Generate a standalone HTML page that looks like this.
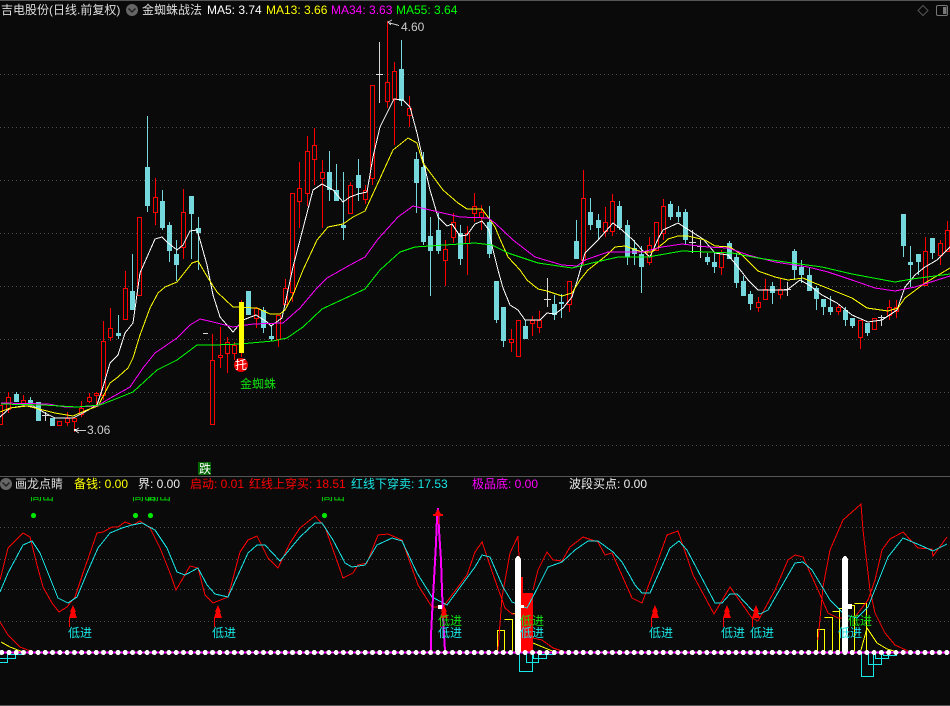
<!DOCTYPE html>
<html lang="zh"><head><meta charset="utf-8"><title>金蜘蛛战法</title>
<style>
html,body{margin:0;padding:0;background:#0a0a0a}
#p{position:relative;width:950px;height:706px;overflow:hidden;background:#0a0a0a;font-family:"Liberation Sans","WenQuanYi Zen Hei","Noto Sans CJK SC",sans-serif;font-size:12px}
#p svg{position:absolute;left:0;top:0}
.t{position:absolute;white-space:nowrap;line-height:14px;height:14px}
.c{position:absolute;overflow:hidden;height:6px;width:24px;top:497px}
.c span{position:absolute;left:0;top:-8px;line-height:14px;color:#00e000;white-space:nowrap}
.l{color:#19e6e6}.g{color:#10e010}
</style></head><body><div id="p">
<svg width="950" height="706" viewBox="0 0 950 706" shape-rendering="crispEdges" fill="none">
<path d="M0 .5H950M0 476.5H950M0 705.5H950" stroke="#555"/>
<path d="M0 74.5H950M0 127.5H950M0 180.5H950M0 233.5H950M0 286.5H950M0 339.5H950M0 392.5H950M0 445.5H950M0 527.5H950M0 559.5H950M0 589.5H950M0 621.5H950" stroke="#4c4c4c" stroke-dasharray="1 3"/>
<!-- white doji -->
<path d="M45.5 412V421M42 415.5H49M203 333.5H208M379.5 42V103M376 74.5H383M547.5 278V307M544 299.5H551M692.5 230V253M689 242.5H696M700.5 240V258M697 246.5H704M787.5 282V296M784 289.5H791M881.5 315V326M878 317.5H885" stroke="#d8d8d8"/>
<!-- cyan wicks -->
<path stroke="#74d8dc" d="M16.5 392V402M30.5 397V404M118.5 315V339M132.5 254V310M147.5 116V212M162.5 190V230M169.5 222V262M176.5 240V281M191.5 196V259M198.5 217V270M248.5 291V315M263.5 307V333M271.5 326V341M329.5 151V201M336.5 164V201M343.5 172V240M358.5 159V201M401.5 40V106M416.5 152V213M423.5 152V245M430.5 217V296M438.5 213V254M460.5 225V265M489.5 206V258M496.5 281V323M503.5 307V347M525.5 320V339M554.5 295V320M561.5 294V318M576.5 220V259M590.5 198V230M598.5 214V240M619.5 201V230M627.5 220V265M634.5 240V265M641.5 246V293M670.5 201V220M678.5 206V222M685.5 209V245M707.5 253V265M714.5 253V273M729.5 241V259M736.5 253V288M743.5 276V296M750.5 291V310M772.5 282V304M794.5 249V280M801.5 260V283M809.5 268V291M816.5 286V310M823.5 299V315M830.5 296V315M845.5 307V326M852.5 318V328M867.5 323V336M903.5 214V257M910.5 246V287M918.5 254V275M932.5 238V259"/>
<!-- cyan bodies -->
<path fill="#74d8dc" d="M14 394h5V402h-5zM28 400h5V404h-5zM36 402h5V421h-5zM50 418h5V426h-5zM116 333h5V336h-5zM130 291h5V310h-5zM145 167h5V206h-5zM160 201h5V228h-5zM167 225h5V251h-5zM174 254h5V265h-5zM189 196h5V214h-5zM196 228h5V233h-5zM246 291h5V315h-5zM261 310h5V328h-5zM269 336h5V339h-5zM327 172h5V190h-5zM334 190h5V201h-5zM341 225h5V228h-5zM356 175h5V188h-5zM399 69h5V101h-5zM414 159h5V183h-5zM421 167h5V242h-5zM428 236h5V251h-5zM436 230h5V251h-5zM458 233h5V259h-5zM487 222h5V254h-5zM494 281h5V320h-5zM501 307h5V341h-5zM523 326h5V339h-5zM552 304h5V315h-5zM559 302h5V304h-5zM574 241h5V259h-5zM588 212h5V225h-5zM596 220h5V228h-5zM617 206h5V228h-5zM625 225h5V257h-5zM632 248h5V254h-5zM639 254h5V267h-5zM668 204h5V217h-5zM676 212h5V217h-5zM683 212h5V240h-5zM705 257h5V262h-5zM712 262h5V267h-5zM727 243h5V259h-5zM734 257h5V283h-5zM741 281h5V296h-5zM748 294h5V304h-5zM770 286h5V293h-5zM792 251h5V270h-5zM799 267h5V275h-5zM807 275h5V291h-5zM814 288h5V299h-5zM821 299h5V307h-5zM828 307h5V312h-5zM843 310h5V320h-5zM850 318h5V326h-5zM865 323h5V333h-5zM901 214h5V246h-5zM908 262h5V265h-5zM916 254h5V262h-5zM930 238h5V253h-5z"/>
<!-- red wicks -->
<path stroke="#f00" d="M8.5 392V413M23.5 395V407M59.5 421V426M67.5 412V426M74.5 417V432M81.5 401V417M89.5 393V403M96.5 392V407M103.5 321V400M110.5 308V341M125.5 271V319M155.5 178V225M183.5 189V259M212.5 334V360M220.5 327V368M227.5 337V373M234.5 342V360M241.5 300V357M256.5 307V328M278.5 315V347M285.5 279V304M292.5 193V302M299.5 162V228M307.5 136V206M314.5 128V185M322.5 160V228M350.5 182V213M365.5 185V204M372.5 85V185M387.5 21V108M394.5 62V145M409.5 96V127M445.5 240V286M453.5 213V243M467.5 226V275M474.5 193V222M481.5 205V230M511.5 329V352M532.5 316V336M539.5 311V333M569.5 281V312M583.5 170V265M605.5 207V237M612.5 194V236M649.5 237V265M663.5 199V240M721.5 250V275M758.5 297V312M765.5 279V299M780.5 279V299M838.5 305V315M860.5 320V349M889.5 300V320M896.5 300V318M925.5 237V285M940.5 240V265M947.5 221V251"/>
<!-- red bodies -->
<path stroke="#f00" fill="#0a0a0a" d="M-1.5 405.5h4V424.5h-4zM6.5 397.5h4V409.5h-4zM21.5 400.5h4V403.5h-4zM57.5 421.5h4V425.5h-4zM65.5 418.5h4V422.5h-4zM72.5 418.5h4V421.5h-4zM79.5 408.5h4V414.5h-4zM87.5 397.5h4V401.5h-4zM94.5 393.5h4V395.5h-4zM101.5 341.5h4V395.5h-4zM108.5 328.5h4V337.5h-4zM123.5 288.5h4V319.5h-4zM137.5 217.5h4V295.5h-4zM153.5 197.5h4V212.5h-4zM181.5 212.5h4V247.5h-4zM210.5 360.5h4V424.5h-4zM218.5 355.5h4V357.5h-4zM225.5 342.5h4V353.5h-4zM232.5 345.5h4V353.5h-4zM254.5 308.5h4V318.5h-4zM276.5 315.5h4V339.5h-4zM283.5 288.5h4V304.5h-4zM290.5 193.5h4V292.5h-4zM297.5 188.5h4V201.5h-4zM305.5 151.5h4V193.5h-4zM312.5 145.5h4V159.5h-4zM320.5 172.5h4V178.5h-4zM348.5 185.5h4V213.5h-4zM363.5 190.5h4V199.5h-4zM370.5 85.5h4V178.5h-4zM385.5 82.5h4V101.5h-4zM392.5 71.5h4V99.5h-4zM407.5 108.5h4V115.5h-4zM443.5 249.5h4V260.5h-4zM451.5 222.5h4V237.5h-4zM465.5 233.5h4V243.5h-4zM472.5 206.5h4V213.5h-4zM479.5 212.5h4V217.5h-4zM509.5 339.5h4V342.5h-4zM516.5 320.5h4V356.5h-4zM530.5 320.5h4V323.5h-4zM537.5 320.5h4V327.5h-4zM567.5 281.5h4V304.5h-4zM581.5 198.5h4V260.5h-4zM603.5 222.5h4V231.5h-4zM610.5 201.5h4V231.5h-4zM647.5 245.5h4V262.5h-4zM654.5 222.5h4V250.5h-4zM661.5 206.5h4V233.5h-4zM719.5 252.5h4V267.5h-4zM756.5 302.5h4V307.5h-4zM763.5 289.5h4V299.5h-4zM778.5 289.5h4V294.5h-4zM836.5 307.5h4V311.5h-4zM858.5 320.5h4V337.5h-4zM872.5 318.5h4V329.5h-4zM887.5 307.5h4V315.5h-4zM894.5 307.5h4V311.5h-4zM923.5 251.5h4V285.5h-4zM938.5 243.5h4V255.5h-4zM945.5 230.5h4V251.5h-4z"/>
<!-- MA5 -->
<polyline stroke="#fff" points="0,417 10,408 23,406 33,406 45,413 55,418 73,418 83,413 97,405 103,387 110,363 118,355 125,333 133,323 140,273 155,239 162,237 167,242 177,250 183,245 190,231 197,230 200,240 207,265 213,295 220,317 233,332 243,320 256,315 267,322 271,326 282,318 293,267 300,240 307,213 313,190 322,184 333,190 343,202 350,197 358,194 367,192 373,157 380,127 387,113 394,99 403,100 410,107 417,133 423,160 430,190 438,217 447,226 452,224 460,236 467,235 475,224 482,221 489,230 493,250 498,270 503,288 510,305 518,310 525,320 540,320 547,313 555,314 563,308 572,297 578,278 585,253 598,240 613,223 622,230 633,240 642,250 650,257 658,239 663,230 678,223 692,232 703,239 715,253 728,255 738,267 748,280 758,290 787,290 800,280 809,285 822,295 837,303 852,315 868,322 882,320 897,310 905,287 915,275 925,267 937,260 950,247"/>
<!-- MA13 -->
<polyline stroke="#ff0" points="0,412 10,408 27,406 43,410 55,413 73,416 87,410 98,406 110,383 118,377 128,368 133,358 140,335 150,308 158,293 165,287 177,282 192,263 198,261 208,278 217,292 233,307 257,308 270,314 280,314 285,310 293,295 303,270 317,240 328,227 343,224 353,217 365,211 377,185 393,150 408,138 417,143 423,163 443,190 458,203 467,209 482,209 488,217 495,227 500,239 508,257 520,270 527,280 538,289 547,291 562,296 572,293 580,280 588,270 607,255 615,247 625,246 642,252 652,252 665,242 668,239 678,236 688,236 705,240 715,246 730,247 742,255 758,271 775,277 788,280 803,278 812,282 832,290 852,298 867,308 888,311 898,308 905,298 925,283 950,268"/>
<!-- MA34 -->
<polyline stroke="#f0f" points="1,403 48,404 65,407 77,407 97,406 107,400 130,387 143,368 155,353 177,338 190,325 200,319 213,322 233,327 253,324 283,323 300,308 317,288 327,278 350,265 365,257 378,239 398,217 413,206 430,210 460,217 488,218 495,223 513,240 535,257 562,265 577,266 585,260 608,252 642,252 662,247 682,244 708,247 728,248 748,255 775,262 808,267 828,272 852,280 875,288 895,291 915,287 950,276"/>
<!-- MA55 -->
<polyline stroke="#0f0" points="1,404 43,405 77,407 100,405 113,400 133,392 157,370 177,360 197,345 215,345 240,344 273,341 287,338 303,327 322,309 365,289 380,270 400,252 415,247 475,243 492,245 508,253 538,263 572,268 592,263 618,257 648,257 682,251 708,252 732,253 758,258 792,263 822,267 852,274 895,282 912,279 950,274"/>
<rect x="239" y="302" width="5" height="51" fill="#ff0"/>
<!-- extreme arrows -->
<path d="M86 430.5H76M79 428L75 430.5L79 433" stroke="#ccc"/><rect x="74" y="429" width="2" height="2" fill="#fff"/>
<path d="M399 25.5L388 22.5M392 20L388 22L391 25" stroke="#ccc"/>
<!-- lower panel: decays, stairs -->
<path d="M497.5 651V630.5H504.5V651M504.5 619.5H512.5V651M512.5 613.5H516M817.5 651V629.5H824.5V651M824.5 617.5H832.5V651M832.5 611.5H839.5V651M839.5 651V608.5H843M848 605.5H854.5V651M854.5 603.5H866.5V651" stroke="#ff0" stroke-width="1"/>
<polyline stroke="#ff0" points="1,642 10,647 23,652"/>
<polyline stroke="#ff0" points="533,643 545,648 555,652"/>
<polyline stroke="#ff0" points="861,650 867,628 877,643 887,649 897,652"/>
<path d="M0 662.5H7.5V652M0 658.5H15.5V653M8 654.5H22V652M519.5 653V671.5H532.5V653M526.5 653V662.5H538.5V653M533.5 653V658.5H546.5V653M538 654.5H555V652M861.5 653V676.5H873.5V653M868.5 653V664.5H881.5V653M875.5 653V658.5H888.5V653M883.5 653V655.5H896.5V653" stroke="#19e6e6"/>
<path fill="#f00" d="M521 577H523V593H533V652H521z"/>
<!-- red KDJ -->
<polyline stroke="#f00" points="0,580 8,548 23,533 30,537 37,565 43,587 52,603 59,612 67,607 75,597 83,573 97,533 103,532 112,527 118,527 125,522 133,525 140,521 150,528 160,548 170,573 176,590 190,566 198,568 205,595 213,603 228,597 240,552 248,540 257,536 268,558 278,568 290,543 300,528 315,516 325,527 343,578 353,573 358,565 367,563 378,535 388,534 402,540 418,585 432,607 443,607 467,575 475,552 482,542 495,580 505,608 512,614 520,614"/>
<polyline stroke="#f00" points="498,650 502,597 510,553 518,536 521,600"/>
<polyline stroke="#f00" points="533,590 538,570 547,552 553,560 562,561 570,547 583,537 598,542 605,555 612,553 632,598 642,603 657,563 667,535 678,531 693,575 714,614 730,587 752,618 758,621 775,590 788,560 795,555 803,557 818,590 828,613 838,618 848,618"/>
<polyline stroke="#f00" points="818,640 823,587 830,550 843,520 861,504 863,530 870,590 875,613 885,633 895,645 908,651"/>
<polyline stroke="#f00" points="855,617 868,600 875,580 882,550 890,539 903,532 918,548 932,549 933,556 947,537"/>
<polyline stroke="#f00" points="0,622 8,635 20,647 33,652"/>
<polyline stroke="#f00" points="533,638 542,640 553,648 565,652"/>
<!-- cyan KDJ -->
<polyline stroke="#19e6e6" points="0,592 8,573 23,545 32,541 40,553 58,598 68,603 77,597 87,573 98,548 110,533 122,528 132,525 142,523 155,530 167,548 177,572 185,575 198,568 207,585 215,594 228,597 248,553 257,545 265,545 280,561 300,537 315,523 322,523 333,540 345,563 352,567 365,565 377,545 392,538 402,541 417,573 432,597 447,605 475,567 482,555 490,557 503,587 512,602 527,608 538,587 548,567 562,562 575,550 588,541 598,541 613,552 622,562 635,585 642,593 650,593 670,548 679,541 687,550 715,603 722,603 730,594 737,594 752,610 760,614 768,610 795,563 803,562 812,570 830,600 845,615 857,618 868,607 888,557 903,538 922,546 933,551 947,544"/>
<!-- magenta baseline / spike -->
<path d="M0 652.5H950" stroke="#f0f" stroke-width="2"/>
<polyline stroke="#f0f" stroke-width="2" points="431,651 431,635 432,615 434,580 436,543 437,517 438,508 439,530 441,560 442,590 443,617 445,651"/>
<!-- white pillars -->
<path fill="#fff" d="M515 652V559L517 556H519L521 559V652zM842 652V559L844 556H846L848 559V652zM438 605h4v4h-4zM521 605h3v3h-3zM848 604h4v5h-4z"/>
<path d="M1.7 652.5H950" stroke="#fff" stroke-width="5" stroke-linecap="round" stroke-dasharray="0 7.27"/>
<!-- red arrows -->
<path fill="#f00" d="M73 605L76 612H75L77 618H69L71 612H70zM218 605L221 612H220L222 618H214L216 612H215zM444 605L447 612H446L448 618H440L442 612H441zM438 509L441 514H443V516H433V514H435zM655 605L658 612H657L659 618H651L653 612H652zM727 605L730 612H729L731 618H723L725 612H724zM756 605L759 612H758L760 618H752L754 612H753z"/>
<path d="M69.5 618V627M214.5 618V627M440.5 618V627M438.5 516V524M651.5 618V627M723.5 618V627M752.5 618V627" stroke="#f00"/>
<g fill="#00e600" shape-rendering="auto"><circle cx="33.5" cy="515.5" r="2.6"/><circle cx="135.5" cy="515.5" r="2.6"/><circle cx="150.5" cy="515.5" r="2.6"/><circle cx="324.5" cy="515.5" r="2.6"/></g>
<!-- legend icons -->
<g shape-rendering="auto">
<circle cx="132" cy="10" r="6" fill="#666"/><path d="M128.5 8.5L132 12L135.500 8.5" stroke="#222" stroke-width="1.500"/>
<circle cx="6" cy="484" r="6" fill="#666"/><path d="M2.500 482.500L6 486L9.500 482.500" stroke="#222" stroke-width="1.500"/>
<path d="M923 5.500L928 10.500L923 15.500L918 10.500Z" stroke="#555"/>
<rect x="936.500" y="5.500" width="11" height="10" rx="1.500" stroke="#777"/><rect x="943" y="7" width="3.500" height="7" fill="#777"/>
<circle cx="241" cy="365" r="7" fill="#e80000"/>
</g>
<rect x="198" y="462" width="13" height="13" fill="#006400"/>
</svg>
<div class="t" style="left:1px;top:3px;color:#ddd">吉电股份(日线.前复权)</div>
<div class="t" style="left:142px;top:3px;color:#ddd">金蜘蛛战法</div>
<div class="t" style="left:207px;top:3px;color:#fff">MA5: 3.74</div>
<div class="t" style="left:266px;top:3px;color:#ff0">MA13: 3.66</div>
<div class="t" style="left:331px;top:3px;color:#f0f">MA34: 3.63</div>
<div class="t" style="left:396px;top:3px;color:#0f0">MA55: 3.64</div>
<div class="t" style="left:401px;top:20px;color:#ccc">4.60</div>
<div class="t" style="left:87px;top:423px;color:#ccc">3.06</div>
<div class="t" style="left:235px;top:358px;color:#fff">托</div>
<div class="t g" style="left:240px;top:377px">金蜘蛛</div>
<div class="t" style="left:199px;top:462px;color:#fff">跌</div>
<div class="t" style="left:15px;top:477px;color:#ddd">画龙点睛</div>
<div class="t" style="left:74px;top:477px;color:#ff0">备钱: 0.00</div>
<div class="t" style="left:138px;top:477px;color:#eee">界: 0.00</div>
<div class="t" style="left:190px;top:477px;color:#f00">启动: 0.01</div>
<div class="t" style="left:249px;top:477px;color:#f00">红线上穿买: 18.51</div>
<div class="t" style="left:351px;top:477px;color:#19e6e6">红线下穿卖: 17.53</div>
<div class="t" style="left:472px;top:477px;color:#f0f">极品底: 0.00</div>
<div class="t" style="left:569px;top:477px;color:#eee">波段买点: 0.00</div>
<div class="c" style="left:30px"><span>高山</span></div>
<div class="c" style="left:132px"><span>高山</span></div>
<div class="c" style="left:147px"><span>高山</span></div>
<div class="c" style="left:321px"><span>高山</span></div>
<div class="t l" style="left:68px;top:626px">低进</div>
<div class="t l" style="left:212px;top:626px">低进</div>
<div class="t g" style="left:438px;top:614px">低进</div>
<div class="t l" style="left:438px;top:626px">低进</div>
<div class="t g" style="left:520px;top:614px">低进</div>
<div class="t l" style="left:520px;top:626px">低进</div>
<div class="t l" style="left:649px;top:626px">低进</div>
<div class="t l" style="left:721px;top:626px">低进</div>
<div class="t l" style="left:750px;top:626px">低进</div>
<div class="t l" style="left:838px;top:626px">低进</div>
<div class="t g" style="left:848px;top:614px">低进</div>
</div></body></html>
